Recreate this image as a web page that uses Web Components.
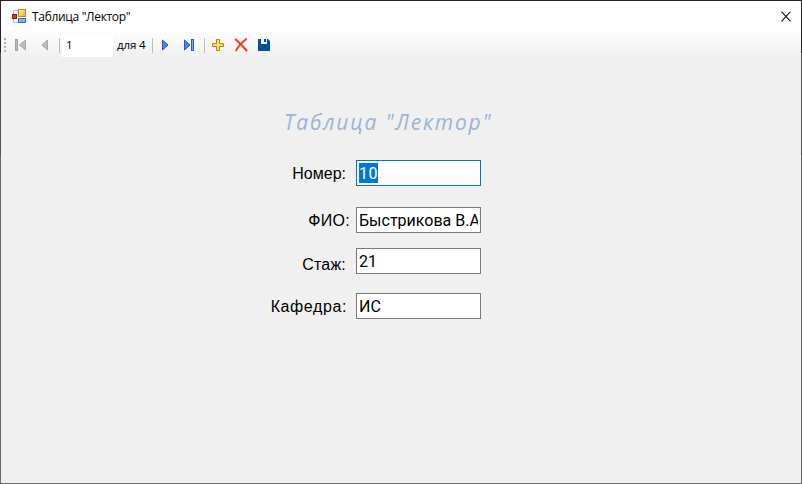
<!DOCTYPE html>
<html lang="ru"><head><meta charset="utf-8"><title>Таблица "Лектор"</title>
<style>html,body{margin:0;height:100%;overflow:hidden}</style></head><body>
<app-window></app-window>
<script>
const define=(name,html)=>customElements.define(name,class extends HTMLElement{
  constructor(){super();this.attachShadow({mode:'open'}).innerHTML=html;}
});
define('title-bar',`<style>
:host{display:flex;align-items:center;height:31px;background:#fff;padding:0 10px 0 11px;box-sizing:border-box;font:12px "Open Sans","Noto Sans",sans-serif;color:#000}
span{flex:1;margin-left:5px;letter-spacing:-.32px;white-space:nowrap;line-height:16px}svg{display:block}
</style>
<svg width="15" height="15" viewBox="0 0 15 15"><defs><linearGradient id="y" x2="1" y2="1"><stop stop-color="#fff0a0"/><stop offset="1" stop-color="#efb01c"/></linearGradient></defs>
<path d="M1.5 5V1.5h5M1.5 10v3.5h5" fill="none" stroke="#bdbdbd"/><rect x="6.5" y="9.5" width="7" height="4" fill="#7fb2f2" stroke="#3a6fc0"/><rect x="6.5" y=".5" width="7" height="7" fill="url(#y)" stroke="#b5892e"/><rect x=".5" y="5.5" width="4" height="4" fill="#d33b30" stroke="#8e1919"/></svg>
<span><slot></slot></span>
<svg width="10" height="11" viewBox="0 0 11 11" preserveAspectRatio="none"><path d="M.6.6l9.8 9.8M10.4.6L.6 10.4" stroke="#000" stroke-width="1.1"/></svg>`);
define('tool-separator',`<style>:host{display:block;width:1px;height:15px;background:#bdbdbd}</style>`);
const icons={
first:'<rect x="2.5" y="2.5" width="2" height="11" fill="#b9b9b9" stroke="#a2a2a2"/><path d="M12.5 3v10L6.5 8z" fill="#bdbdbd" stroke="#a8a8a8"/>',
prev:'<path d="M10.5 3v10L5 8z" fill="#bdbdbd" stroke="#a8a8a8"/>',
next:'<path d="M5.5 3v10l5.5-5z" fill="#4388ed" stroke="#2a5cc0"/>',
last:'<path d="M3.5 3v10l5.5-5z" fill="#4388ed" stroke="#2a5cc0"/><rect x="10.5" y="2.5" width="2" height="11" fill="#79aaf0" stroke="#2a5cc0"/>',
add:'<path d="M6.5 2.5h3v4h4v3h-4v4h-3v-4h-4v-3h4z" fill="#ffdd58" stroke="#b28419"/>',
remove:'<path d="M2.8 2.5Q8 7 13.5 13.5" fill="none" stroke="#e3432b" stroke-width="2.2" stroke-linecap="round"/><path d="M13.3 2Q7 6.5 3 13.5" fill="none" stroke="#e3432b" stroke-width="1.7" stroke-linecap="round"/>',
save:'<path d="M2 2h3v5h6V2h1l2 2v10H2z" fill="#00519c"/><path d="M8 2h2v3H8z" fill="#00519c"/>'};
customElements.define('tool-icon',class extends HTMLElement{connectedCallback(){
 if(!this.shadowRoot)this.attachShadow({mode:'open'}).innerHTML='<style>:host{display:block;width:16px;height:16px}svg{display:block}</style><svg width="16" height="16" viewBox="0 0 16 16">'+icons[this.getAttribute('name')]+'</svg>';
}});
define('record-toolbar',`<style>
:host{display:flex;align-items:center;height:26px;padding-left:3px;background:linear-gradient(#fdfdfd,#f0f0f0);font:12px "Open Sans","Noto Sans",sans-serif;color:#000}
.grip{width:2px;height:14px;background:repeating-linear-gradient(#b4b4b4 0 2px,transparent 2px 4px)}
.page{box-sizing:border-box;width:51px;height:23px;background:#fff;padding-left:4px;line-height:21px;font-size:11.5px;margin-left:2px}
.count{width:35px;margin-left:4px;line-height:20px;white-space:nowrap;font-size:11.5px;letter-spacing:-.15px}
</style><div class="grip"></div><tool-icon name="first" style="margin-left:7px"></tool-icon><tool-icon name="prev" style="margin-left:8px"></tool-icon>
<tool-separator style="margin-left:6px"></tool-separator><div class="page">1</div><div class="count">для 4</div><tool-separator></tool-separator>
<tool-icon name="next" style="margin-left:4px"></tool-icon><tool-icon name="last" style="margin-left:8px"></tool-icon><tool-separator style="margin-left:7px"></tool-separator>
<tool-icon name="add" style="margin-left:5px"></tool-icon><tool-icon name="remove" style="margin-left:7px"></tool-icon><tool-icon name="save" style="margin-left:7px"></tool-icon>`);
define('form-row',`<style>
:host{display:flex;align-items:flex-start;height:26px;font:16px/20px Roboto,"Liberation Sans",sans-serif;color:#000}
.label{font-family:"Liberation Sans",sans-serif;text-align:right;white-space:nowrap;padding-top:var(--drop,4px);padding-right:var(--gap,10px);box-sizing:border-box;width:355px;letter-spacing:var(--track,0)}
.field{box-sizing:border-box;width:125px;height:26px;border:1px solid var(--edge,#7a7a7a);background:#fff;padding:2px;overflow:hidden}
.clip{overflow:hidden;white-space:nowrap;height:20px;line-height:22px}
::slotted(mark){display:inline-block;height:20px;background:#0078d7;color:#fff;letter-spacing:.4px}
</style><div class="label"><slot name="label"></slot></div><div class="field"><div class="clip"><slot></slot></div></div>`);
define('app-window',`<style>
:host{display:flex;flex-direction:column;box-sizing:border-box;width:802px;height:484px;background:#f0f0f0;border:1px solid #626262;border-top-color:#252525;border-image:linear-gradient(#252525 0 11%,#555 11% 32%,#686868 32%) 1}
h1{margin:50px 0 0 283px;height:28px;font:italic 400 21px/28px "Open Sans","Noto Sans",sans-serif;color:#9ab5d3;letter-spacing:1.8px;white-space:nowrap}
form{display:flex;flex-direction:column;margin-top:24px}
</style><title-bar>Таблица "Лектор"</title-bar><record-toolbar></record-toolbar><h1>Таблица "Лектор"</h1>
<form><form-row style="--edge:#0078b0"><span slot="label">Номер:</span><mark>10</mark></form-row>
<form-row style="margin-top:21px;--gap:6px;--track:.3px"><span slot="label">ФИО:</span>Быстрикова В.А.</form-row>
<form-row style="margin-top:15px;--drop:7px;--track:.2px"><span slot="label">Стаж:</span>21</form-row>
<form-row style="margin-top:19px;--gap:9px;--track:.6px"><span slot="label">Кафедра:</span>ИС</form-row></form>`);
</script></body></html>
